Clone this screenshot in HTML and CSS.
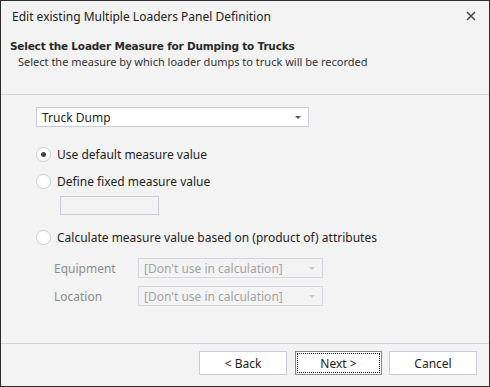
FILE: index.html
```html
<!DOCTYPE html>
<html lang="en">
<head>
  <meta charset="UTF-8">
  <title>Edit existing Multiple Loaders Panel Definition</title>
  <link rel="stylesheet" href="styles.css">
</head>
<body>
  <div class="dialog">
    <div class="titlebar">
      <span class="title">Edit existing Multiple Loaders Panel Definition</span>
      <svg class="close" width="10" height="10" viewBox="0 0 10 10">
        <path d="M1 1 L9 9 M9 1 L1 9" stroke="#444" stroke-width="1.5"/>
      </svg>
    </div>

    <div class="header">
      <h1>Select the Loader Measure for Dumping to Trucks</h1>
      <p>Select the measure by which loader dumps to truck will be recorded</p>
    </div>

    <div class="content">
      <div class="combo main-combo">
        <span>Truck Dump</span>
        <span class="arrow"></span>
      </div>

      <div class="radio-row first">
        <span class="radio checked"></span>
        <span>Use default measure value</span>
      </div>
      <div class="radio-row">
        <span class="radio"></span>
        <span>Define fixed measure value</span>
      </div>
      <div class="fixed-input"></div>
      <div class="radio-row">
        <span class="radio"></span>
        <span>Calculate measure value based on (product of) attributes</span>
      </div>

      <div class="attr-row">
        <span class="attr-label">Equipment</span>
        <div class="combo disabled">
          <span>[Don't use in calculation]</span>
          <span class="arrow"></span>
        </div>
      </div>
      <div class="attr-row">
        <span class="attr-label">Location</span>
        <div class="combo disabled">
          <span>[Don't use in calculation]</span>
          <span class="arrow"></span>
        </div>
      </div>
    </div>

    <div class="footer">
      <button class="btn back">&lt; Back</button>
      <button class="btn default"><span class="focus">Next &gt;</span></button>
      <button class="btn">Cancel</button>
    </div>
  </div>
</body>
</html>
```

FILE: styles.css
```css
html, body {
  margin: 0;
  padding: 0;
}

body {
  font-family: "Noto Sans", "Open Sans", sans-serif;
  font-size: 12px;
  color: #1e1e1e;
  background-color: #f3f3f3;
}

.dialog {
  width: 490px;
  height: 387px;
  box-sizing: border-box;
  border: 1px solid #2b2b2b;
  background-color: #f3f3f3;
  display: flex;
  flex-direction: column;
}

.titlebar {
  height: 30px;
  display: flex;
  align-items: center;
  justify-content: space-between;
  padding: 0 13px 0 11px;
}

.title {
  font-size: 12px;
  color: #222;
}

.header {
  height: 64px;
  padding: 8px 0 0 9px;
  box-sizing: border-box;
  border-bottom: 1px solid #d3d3e3;
}

h1 {
  margin: 0;
  font-family: "DejaVu Sans", sans-serif;
  font-weight: bold;
  font-size: 10.5px;
  letter-spacing: -0.2px;
  line-height: 15px;
  color: #2a2a2a;
}

.header p {
  margin: 0 0 0 8px;
  font-size: 11px;
  line-height: 16px;
  color: #333;
}

.content {
  flex: 1;
  padding: 12px 0 0 35px;
  border-bottom: 1px solid #d3d3e3;
}

.combo {
  height: 20px;
  box-sizing: border-box;
  border: 1px solid #cbcbdf;
  background-color: #fff;
  display: flex;
  align-items: center;
  justify-content: space-between;
  padding: 0 7px 0 5px;
}

.main-combo {
  width: 273px;
}

.arrow {
  width: 0;
  height: 0;
  border-left: 3.5px solid transparent;
  border-right: 3.5px solid transparent;
  border-top: 3.5px solid #555;
}

.radio-row {
  display: flex;
  align-items: center;
  gap: 6px;
  height: 17px;
  margin-top: 10px;
}

.radio-row.first {
  margin-top: 19px;
}

.radio {
  width: 15px;
  height: 15px;
  box-sizing: border-box;
  border: 1px solid #cdcdcd;
  border-radius: 50%;
  background-color: #fff;
  display: flex;
  align-items: center;
  justify-content: center;
}

.radio.checked::after {
  content: "";
  width: 5px;
  height: 5px;
  border-radius: 50%;
  background-color: #444;
}

.fixed-input {
  width: 99px;
  height: 19px;
  box-sizing: border-box;
  border: 1px solid #cbcbdf;
  margin: 6px 0 14px 24px;
}

.attr-row {
  display: flex;
  align-items: center;
  height: 20px;
  margin: 12px 0 0 18px;
}

.attr-row + .attr-row {
  margin-top: 8px;
}

.attr-label {
  width: 84px;
  color: #8c8c8c;
}

.combo.disabled {
  width: 185px;
  background-color: #f3f3f3;
  border-color: #d6d6e2;
  color: #a3a3a3;
}

.combo.disabled .arrow {
  border-top-color: #c4c4c4;
}

.footer {
  height: 42px;
  display: flex;
  align-items: flex-start;
  justify-content: flex-end;
  gap: 7px;
  padding: 7px 12px 0 0;
  box-sizing: border-box;
}

.btn {
  width: 88px;
  height: 24px;
  font-family: "Noto Sans", "Open Sans", sans-serif;
  font-size: 12px;
  color: #222;
  background-color: #fff;
  border: 1px solid #cbcbdf;
  padding: 0;
  display: flex;
  align-items: center;
  justify-content: center;
}

.btn.back {
  margin-right: 1px;
}

.btn.default {
  width: 87px;
  border-color: #8a8a8a;
  padding: 1px;
}

.focus {
  display: flex;
  align-items: center;
  justify-content: center;
  width: 100%;
  height: 100%;
  box-sizing: border-box;
  border: 1px dotted #222;
}
```
